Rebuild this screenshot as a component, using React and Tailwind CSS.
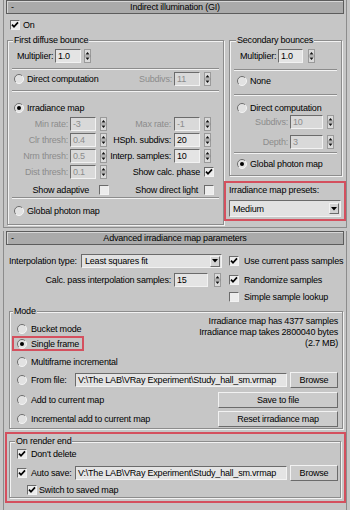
import React from "react";

const sunken = "border border-t-[#6b6b6b] border-l-[#6b6b6b] border-b-[#f2f2f2] border-r-[#f2f2f2]";
const raised = "border border-t-[#f2f2f2] border-l-[#f2f2f2] border-b-[#6b6b6b] border-r-[#6b6b6b]";

function Field({ value, className = "", dim }) {
  return (
    <div
      className={`${sunken} h-[14px] shrink-0 flex items-center overflow-hidden whitespace-nowrap pl-[2px] ${
        dim ? "bg-[#d9d9d9] text-[#8c8c8c]" : "bg-[#e4e4e4] text-black"
      } ${className}`}
    >
      {value}
    </div>
  );
}

function Arrows({ className = "" }) {
  return (
    <svg width="7" height="14" viewBox="0 0 7 14" className={`shrink-0 ${className}`}>
      <rect x="0.5" y="0.5" width="6" height="13" fill="#dadada" stroke="#9a9a9a" />
      <line x1="0" y1="7" x2="7" y2="7" stroke="#8a8a8a" />
      <path d="M1.5 5.5 L3.5 3 L5.5 5.5Z" fill="#111" />
      <path d="M1.5 8.5 L3.5 11 L5.5 8.5Z" fill="#111" />
    </svg>
  );
}

function Check({ on }) {
  return (
    <div className={`${sunken} w-[10px] h-[10px] bg-[#ececec] shrink-0 flex items-center justify-center`}>
      {on && (
        <svg width="8" height="8" viewBox="0 0 8 8">
          <path d="M1 3.6 L3 5.8 L7 1.4" fill="none" stroke="#000" strokeWidth="1.7" />
        </svg>
      )}
    </div>
  );
}

function Radio({ on }) {
  return (
    <svg width="10" height="10" viewBox="0 0 10 10" className="shrink-0">
      <circle cx="5" cy="5" r="4.5" fill="#e2e2e2" />
      <path d="M1.8 8.2 A4.5 4.5 0 0 1 8.2 1.8" fill="none" stroke="#6e6e6e" />
      <path d="M8.2 1.8 A4.5 4.5 0 0 1 1.8 8.2" fill="none" stroke="#f4f4f4" />
      {on && <circle cx="5" cy="5" r="2" fill="#000" />}
    </svg>
  );
}

function Sep({ className = "" }) {
  return <div className={`h-0 border-t border-t-[#8c8c8c] border-b border-b-[#f2f2f2] ${className}`} />;
}

function Group({ label, lx = "ml-[5px]", className = "", children }) {
  return (
    <fieldset
      className={`border border-[#8c8c8c] shadow-[inset_1px_1px_0_#f2f2f2,1px_1px_0_#f2f2f2] min-w-0 ${className}`}
    >
      <legend className={`${lx} px-[1px] h-[10px] leading-[10px] bg-[#c6c6c6]`}>{label}</legend>
      {children}
    </fieldset>
  );
}

function Drop({ value, className = "" }) {
  return (
    <div className={`${sunken} bg-[#e2e2e2] flex items-center ${className}`}>
      <span className="flex-1 pl-[3px] whitespace-nowrap">{value}</span>
      <div className={`${raised} bg-[#d2d2d2] w-[10px] h-[11px] mr-[1px] flex items-center justify-center`}>
        <svg width="6" height="4" viewBox="0 0 6 4">
          <path d="M0 0 L6 0 L3 3.5Z" fill="#000" />
        </svg>
      </div>
    </div>
  );
}

function Btn({ children, className = "" }) {
  return (
    <div className={`${raised} bg-[#cbcbcb] h-[16px] shrink-0 flex items-center justify-center ${className}`}>
      {children}
    </div>
  );
}

function Title({ text }) {
  return (
    <div className="mx-[2px] h-[14px] bg-[#aaaaaa] border border-[#5c5c5c] shadow-[inset_1px_1px_0_#d6d6d6] grid grid-cols-[20px_1fr_20px] items-center">
      <span className="pl-[4px]">-</span>
      <span className="text-center whitespace-nowrap">{text}</span>
      <span />
    </div>
  );
}

function ParamRow({ l, v, right }) {
  return (
    <div className="flex items-center h-[14px] mt-[2px]">
      <span className="w-[60px] text-right text-[#8c8c8c] whitespace-nowrap">{l}</span>
      <Field value={v} dim className="w-[26px] ml-[2px]" />
      <Arrows className="ml-[4px]" />
      {right}
    </div>
  );
}

function RightSpin({ l, v, dim }) {
  return (
    <>
      <span className={`w-[64px] text-right whitespace-nowrap ${dim ? "text-[#8c8c8c]" : ""}`}>{l}</span>
      <Field value={v} dim={dim} className="w-[26px] ml-[3px]" />
      <Arrows className="ml-[4px]" />
    </>
  );
}

const path = "V:\\The LAB\\VRay Experiment\\Study_hall_sm.vrmap";

export default function App() {
  return (
    <div className="w-[350px] h-[510px] overflow-hidden bg-[#c6c6c6] text-black text-[9px] tracking-[-0.2px] leading-[12px] flex flex-col font-['Liberation_Sans',Arial,sans-serif]">
      {/* Indirect illumination rollout */}
      <div className="mx-[3px] border-x border-b border-[#8c8c8c] pb-[2px]">
        <Title text="Indirect illumination (GI)" />
        <div className="flex items-center h-[12px] mt-[5px] pl-[6px] gap-[3px]">
          <Check on />
          <span>On</span>
        </div>

        <div className="flex mt-[4px]">
          <Group label="First diffuse bounce" className="ml-[3px] w-[217px] shrink-0 pb-[6px]">
            <div className="flex items-center h-[14px] mt-[4px] pl-[9px]">
              <span className="w-[38px]">Multiplier:</span>
              <Field value="1.0" className="w-[26px]" />
              <Arrows className="ml-[3px]" />
            </div>
            <Sep className="mt-[5px] mx-[4px]" />
            <div className="flex items-center h-[14px] mt-[2px] pl-[6px]">
              <Radio />
              <span className="ml-[3px] whitespace-nowrap">Direct computation</span>
              <div className="ml-auto mr-[12px] flex items-center">
                <span className="text-[#8c8c8c]">Subdivs:</span>
                <Field value="11" dim className="w-[26px] ml-[2px]" />
                <Arrows className="ml-[4px]" />
              </div>
            </div>
            <Sep className="mt-[4px] mx-[4px]" />
            <div className="flex items-center h-[14px] mt-[9px] pl-[6px]">
              <Radio on />
              <span className="ml-[3px]">Irradiance map</span>
            </div>
            <ParamRow l="Min rate:" v="-3" right={<RightSpin l="Max rate:" v="-1" dim />} />
            <ParamRow l="Clr thresh:" v="0.4" right={<RightSpin l="HSph. subdivs:" v="20" />} />
            <ParamRow l="Nrm thresh:" v="0.5" right={<RightSpin l="Interp. samples:" v="10" />} />
            <ParamRow
              l="Dist thresh:"
              v="0.1"
              right={
                <>
                  <span className="w-[93px] text-right whitespace-nowrap">Show calc. phase</span>
                  <div className="ml-[4px]">
                    <Check on />
                  </div>
                </>
              }
            />
            <div className="flex items-center h-[12px] mt-[5px]">
              <span className="w-[81px] text-right whitespace-nowrap">Show adaptive</span>
              <div className="ml-[10px]">
                <Check />
              </div>
              <span className="w-[89px] text-right whitespace-nowrap">Show direct light</span>
              <div className="ml-[6px]">
                <Check />
              </div>
            </div>
            <Sep className="mt-[1px] mx-[4px]" />
            <div className="flex items-center h-[14px] mt-[5px] pl-[6px]">
              <Radio />
              <span className="ml-[3px]">Global photon map</span>
            </div>
          </Group>

          <div className="w-[122px] shrink-0">
            <Group label="Secondary bounces" lx="ml-[6px]" className="ml-[5px] mr-[4px] pb-[4px]">
              <div className="flex items-center h-[14px] mt-[4px] pl-[10px]">
                <span className="w-[38px]">Multiplier:</span>
                <Field value="1.0" className="w-[25px]" />
                <Arrows className="ml-[5px]" />
              </div>
              <Sep className="mt-[6px] mx-[4px]" />
              <div className="flex items-center h-[14px] mt-[3px] pl-[7px]">
                <Radio />
                <span className="ml-[3px]">None</span>
              </div>
              <Sep className="mt-[6px] mx-[4px]" />
              <div className="flex items-center h-[14px] mt-[5px] pl-[7px]">
                <Radio />
                <span className="ml-[3px] whitespace-nowrap">Direct computation</span>
              </div>
              <div className="flex items-center h-[14px]">
                <span className="w-[58px] text-right text-[#8c8c8c]">Subdivs:</span>
                <Field value="10" dim className="w-[33px] ml-[2px]" />
                <Arrows className="ml-[4px]" />
              </div>
              <div className="flex items-center h-[14px] mt-[6px]">
                <span className="w-[58px] text-right text-[#8c8c8c]">Depth:</span>
                <Field value="3" dim className="w-[33px] ml-[2px]" />
                <Arrows className="ml-[4px]" />
              </div>
              <Sep className="mt-[3px] mx-[4px]" />
              <div className="flex items-center h-[14px] mt-[3px] pl-[7px]">
                <Radio on />
                <span className="ml-[3px] whitespace-nowrap">Global photon map</span>
              </div>
            </Group>

            <div className="mt-[5px] border-2 border-[#d4505e] px-[3px] pb-[2px]">
              <div className="h-[12px] mt-[1px] flex items-center whitespace-nowrap">Irradiance map presets:</div>
              <Drop value="Medium" className="mt-[4px] h-[17px]" />
            </div>
          </div>
        </div>
      </div>

      {/* Advanced irradiance map parameters rollout */}
      <div className="mx-[3px] mt-[3px] flex-1 border-x border-[#8c8c8c]">
        <Title text="Advanced irradiance map parameters" />

        <div className="flex items-center h-[14px] mt-[9px] pl-[5px]">
          <span className="w-[72px] whitespace-nowrap">Interpolation type:</span>
          <Drop value="Least squares fit" className="w-[141px] h-[14px]" />
          <div className="ml-[7px]">
            <Check on />
          </div>
          <span className="ml-[5px] whitespace-nowrap">Use current pass samples</span>
        </div>

        <div className="flex items-center h-[14px] mt-[5px]">
          <span className="w-[167px] text-right whitespace-nowrap">Calc. pass interpolation samples:</span>
          <Field value="15" className="w-[34px] ml-[3px]" />
          <Arrows className="ml-[6px]" />
          <div className="ml-[8px]">
            <Check on />
          </div>
          <span className="ml-[5px] whitespace-nowrap">Randomize samples</span>
        </div>

        <div className="flex items-center h-[14px] mt-[3px] pl-[225px]">
          <Check />
          <span className="ml-[5px] whitespace-nowrap">Simple sample lookup</span>
        </div>

        <Group label="Mode" lx="ml-[3px]" className="ml-[5px] mr-[3px] mt-[2px] pb-[1px]">
          <div className="flex">
            <div>
              <div className="flex items-center h-[14px] mt-[6px] pl-[7px]">
                <Radio />
                <span className="ml-[4px]">Bucket mode</span>
              </div>
              <div className="ml-[2px] w-[72px] border-2 border-[#d4505e] h-[15px] pl-[3px] flex items-center">
                <Radio on />
                <span className="ml-[4px] whitespace-nowrap">Single frame</span>
              </div>
            </div>
            <div className="ml-auto pr-[4px] text-right leading-[11px] whitespace-nowrap">
              <div>Irradiance map has 4377 samples</div>
              <div>Irradiance map takes 2800040 bytes</div>
              <div>(2.7 MB)</div>
            </div>
          </div>
          <div className="flex items-center h-[14px] mt-[4px] pl-[7px]">
            <Radio />
            <span className="ml-[4px] whitespace-nowrap">Multiframe incremental</span>
          </div>
          <div className="flex items-center h-[16px] mt-[3px] pl-[7px]">
            <Radio />
            <span className="ml-[4px] w-[44px]">From file:</span>
            <Field value={path} className="w-[212px]" />
            <Btn className="ml-[3px] w-[48px]">Browse</Btn>
          </div>
          <div className="flex items-center h-[16px] mt-[4px] pl-[7px] pr-[4px]">
            <Radio />
            <span className="ml-[4px] whitespace-nowrap">Add to current map</span>
            <Btn className="ml-auto w-[120px]">Save to file</Btn>
          </div>
          <div className="flex items-center h-[16px] mt-[3px] pl-[7px] pr-[4px]">
            <Radio />
            <span className="ml-[4px] whitespace-nowrap">Incremental add to current map</span>
            <Btn className="ml-auto w-[120px]">Reset irradiance map</Btn>
          </div>
        </Group>

        <div className="ml-[1px] mt-[3px] border-2 border-[#d4505e] pb-[3px]">
          <Group label="On render end" lx="ml-[5px]" className="ml-[2px] mr-[3px] mt-[2px] pb-[1px]">
            <div className="flex items-center h-[12px] mt-[2px] pl-[7px]">
              <Check on />
              <span className="ml-[4px]">Don't delete</span>
            </div>
            <div className="flex items-center h-[16px] mt-[5px] pl-[7px]">
              <Check on />
              <span className="ml-[4px] w-[44px]">Auto save:</span>
              <Field value={path} className="w-[212px]" />
              <Btn className="ml-[3px] w-[48px]">Browse</Btn>
            </div>
            <div className="flex items-center h-[12px] mt-[3px] pl-[17px]">
              <Check on />
              <span className="ml-[2px] whitespace-nowrap">Switch to saved map</span>
            </div>
          </Group>
        </div>
      </div>
    </div>
  );
}
